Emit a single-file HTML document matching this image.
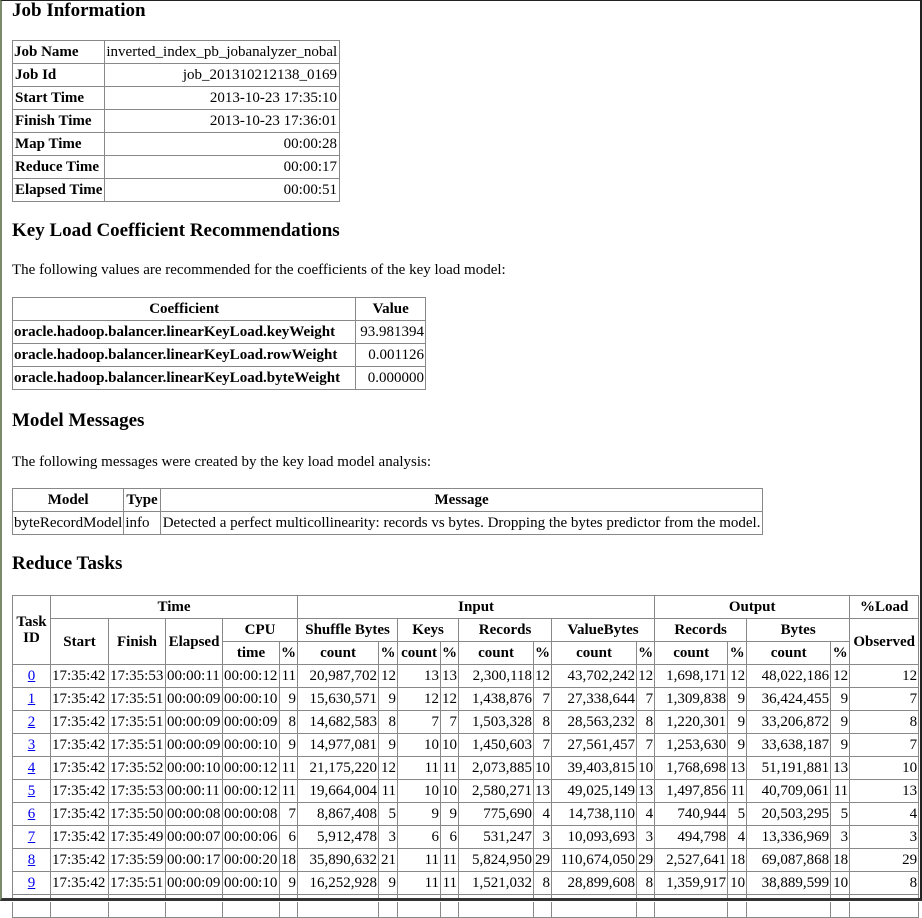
<!DOCTYPE html>
<html><head><meta charset="utf-8"><style>
html,body{margin:0;padding:0;background:#fff;}
body{width:922px;height:902px;overflow:hidden;position:relative;font-family:"Liberation Serif",serif;font-size:15px;color:#000;}
.frame{position:absolute;left:0;top:0;width:918px;height:897px;border-left:2px solid #7a8a6a;border-right:2px solid #222;border-bottom:3px solid #333;border-top:1px solid #222;z-index:10;pointer-events:none;}
.mask{position:absolute;left:0;top:898px;width:922px;height:4px;background:#fff;z-index:9;}
h3{margin:0;font-size:19px;font-weight:bold;position:absolute;left:12px;}
p{margin:0;position:absolute;left:12px;}
table{border-collapse:collapse;position:absolute;left:12px;}
td,th{border:1px solid #888;padding:0 2px;height:22px;line-height:16px;white-space:nowrap;}
th{font-weight:bold;}
.r{text-align:right;}
.b{font-weight:bold;text-align:left;}
a{color:#00e;}
#big td,#big th{padding:0 1px;}
#big{table-layout:fixed;}
</style></head><body>
<div class="frame"></div>
<h3 style="top:0px">Job Information</h3>
<table style="top:40px;width:328px">
<tr><td class="b" style="width:89px;padding:0 1px">Job Name</td><td style="padding:0 1px">inverted_index_pb_jobanalyzer_nobal</td></tr>
<tr><td class="b">Job Id</td><td class="r">job_201310212138_0169</td></tr>
<tr><td class="b">Start Time</td><td class="r">2013-10-23 17:35:10</td></tr>
<tr><td class="b">Finish Time</td><td class="r">2013-10-23 17:36:01</td></tr>
<tr><td class="b">Map Time</td><td class="r">00:00:28</td></tr>
<tr><td class="b">Reduce Time</td><td class="r">00:00:17</td></tr>
<tr><td class="b">Elapsed Time</td><td class="r">00:00:51</td></tr>
</table>
<h3 style="top:220px">Key Load Coefficient Recommendations</h3>
<p style="top:262px">The following values are recommended for the coefficients of the key load model:</p>
<table style="top:297px;width:414px">
<tr><th>Coefficient</th><th>Value</th></tr>
<tr><td class="b" style="padding:0 1px">oracle.hadoop.balancer.linearKeyLoad.keyWeight</td><td class="r" style="padding:0 1px">93.981394</td></tr>
<tr><td class="b" style="padding:0 1px">oracle.hadoop.balancer.linearKeyLoad.rowWeight</td><td class="r" style="padding:0 1px">0.001126</td></tr>
<tr><td class="b" style="padding:0 1px">oracle.hadoop.balancer.linearKeyLoad.byteWeight</td><td class="r" style="padding:0 1px">0.000000</td></tr>
</table>
<h3 style="top:410px">Model Messages</h3>
<p style="top:454px">The following messages were created by the key load model analysis:</p>
<table style="top:488px;width:750px">
<tr><th style="width:110px">Model</th><th style="width:30px">Type</th><th>Message</th></tr>
<tr><td style="padding:0 1px">byteRecordModel</td><td style="padding:0 1px">info</td><td>Detected a perfect multicollinearity: records vs bytes. Dropping the bytes predictor from the model.</td></tr>
</table>
<h3 style="top:553px">Reduce Tasks</h3>
<table id="big" style="top:595px;width:907px">
<colgroup><col style="width:38px"><col style="width:58px"><col style="width:57px"><col style="width:57px"><col style="width:57px"><col style="width:18px"><col style="width:81px"><col style="width:19px"><col style="width:43px"><col style="width:18px"><col style="width:75px"><col style="width:18px"><col style="width:85px"><col style="width:18px"><col style="width:73px"><col style="width:19px"><col style="width:84px"><col style="width:19px"><col style="width:69px"></colgroup>
<tr><th rowspan="3">Task<br>ID</th><th colspan="5">Time</th><th colspan="8">Input</th><th colspan="4">Output</th><th>%Load</th></tr>
<tr><th rowspan="2">Start</th><th rowspan="2">Finish</th><th rowspan="2">Elapsed</th><th colspan="2">CPU</th><th colspan="2">Shuffle Bytes</th><th colspan="2">Keys</th><th colspan="2">Records</th><th colspan="2">ValueBytes</th><th colspan="2">Records</th><th colspan="2">Bytes</th><th rowspan="2">Observed</th></tr>
<tr><th>time</th><th>%</th><th>count</th><th>%</th><th>count</th><th>%</th><th>count</th><th>%</th><th>count</th><th>%</th><th>count</th><th>%</th><th>count</th><th>%</th></tr>
<tr><td style="text-align:center"><a href="#">0</a></td><td>17:35:42</td><td>17:35:53</td><td>00:00:11</td><td>00:00:12</td><td class="r">11</td><td class="r">20,987,702</td><td class="r">12</td><td class="r">13</td><td class="r">13</td><td class="r">2,300,118</td><td class="r">12</td><td class="r">43,702,242</td><td class="r">12</td><td class="r">1,698,171</td><td class="r">12</td><td class="r">48,022,186</td><td class="r">12</td><td class="r">12</td></tr>
<tr><td style="text-align:center"><a href="#">1</a></td><td>17:35:42</td><td>17:35:51</td><td>00:00:09</td><td>00:00:10</td><td class="r">9</td><td class="r">15,630,571</td><td class="r">9</td><td class="r">12</td><td class="r">12</td><td class="r">1,438,876</td><td class="r">7</td><td class="r">27,338,644</td><td class="r">7</td><td class="r">1,309,838</td><td class="r">9</td><td class="r">36,424,455</td><td class="r">9</td><td class="r">7</td></tr>
<tr><td style="text-align:center"><a href="#">2</a></td><td>17:35:42</td><td>17:35:51</td><td>00:00:09</td><td>00:00:09</td><td class="r">8</td><td class="r">14,682,583</td><td class="r">8</td><td class="r">7</td><td class="r">7</td><td class="r">1,503,328</td><td class="r">8</td><td class="r">28,563,232</td><td class="r">8</td><td class="r">1,220,301</td><td class="r">9</td><td class="r">33,206,872</td><td class="r">9</td><td class="r">8</td></tr>
<tr><td style="text-align:center"><a href="#">3</a></td><td>17:35:42</td><td>17:35:51</td><td>00:00:09</td><td>00:00:10</td><td class="r">9</td><td class="r">14,977,081</td><td class="r">9</td><td class="r">10</td><td class="r">10</td><td class="r">1,450,603</td><td class="r">7</td><td class="r">27,561,457</td><td class="r">7</td><td class="r">1,253,630</td><td class="r">9</td><td class="r">33,638,187</td><td class="r">9</td><td class="r">7</td></tr>
<tr><td style="text-align:center"><a href="#">4</a></td><td>17:35:42</td><td>17:35:52</td><td>00:00:10</td><td>00:00:12</td><td class="r">11</td><td class="r">21,175,220</td><td class="r">12</td><td class="r">11</td><td class="r">11</td><td class="r">2,073,885</td><td class="r">10</td><td class="r">39,403,815</td><td class="r">10</td><td class="r">1,768,698</td><td class="r">13</td><td class="r">51,191,881</td><td class="r">13</td><td class="r">10</td></tr>
<tr><td style="text-align:center"><a href="#">5</a></td><td>17:35:42</td><td>17:35:53</td><td>00:00:11</td><td>00:00:12</td><td class="r">11</td><td class="r">19,664,004</td><td class="r">11</td><td class="r">10</td><td class="r">10</td><td class="r">2,580,271</td><td class="r">13</td><td class="r">49,025,149</td><td class="r">13</td><td class="r">1,497,856</td><td class="r">11</td><td class="r">40,709,061</td><td class="r">11</td><td class="r">13</td></tr>
<tr><td style="text-align:center"><a href="#">6</a></td><td>17:35:42</td><td>17:35:50</td><td>00:00:08</td><td>00:00:08</td><td class="r">7</td><td class="r">8,867,408</td><td class="r">5</td><td class="r">9</td><td class="r">9</td><td class="r">775,690</td><td class="r">4</td><td class="r">14,738,110</td><td class="r">4</td><td class="r">740,944</td><td class="r">5</td><td class="r">20,503,295</td><td class="r">5</td><td class="r">4</td></tr>
<tr><td style="text-align:center"><a href="#">7</a></td><td>17:35:42</td><td>17:35:49</td><td>00:00:07</td><td>00:00:06</td><td class="r">6</td><td class="r">5,912,478</td><td class="r">3</td><td class="r">6</td><td class="r">6</td><td class="r">531,247</td><td class="r">3</td><td class="r">10,093,693</td><td class="r">3</td><td class="r">494,798</td><td class="r">4</td><td class="r">13,336,969</td><td class="r">3</td><td class="r">3</td></tr>
<tr><td style="text-align:center"><a href="#">8</a></td><td>17:35:42</td><td>17:35:59</td><td>00:00:17</td><td>00:00:20</td><td class="r">18</td><td class="r">35,890,632</td><td class="r">21</td><td class="r">11</td><td class="r">11</td><td class="r">5,824,950</td><td class="r">29</td><td class="r">110,674,050</td><td class="r">29</td><td class="r">2,527,641</td><td class="r">18</td><td class="r">69,087,868</td><td class="r">18</td><td class="r">29</td></tr>
<tr><td style="text-align:center"><a href="#">9</a></td><td>17:35:42</td><td>17:35:51</td><td>00:00:09</td><td>00:00:10</td><td class="r">9</td><td class="r">16,252,928</td><td class="r">9</td><td class="r">11</td><td class="r">11</td><td class="r">1,521,032</td><td class="r">8</td><td class="r">28,899,608</td><td class="r">8</td><td class="r">1,359,917</td><td class="r">10</td><td class="r">38,889,599</td><td class="r">10</td><td class="r">8</td></tr>
<tr><td>&nbsp;</td><td></td><td></td><td></td><td></td><td></td><td></td><td></td><td></td><td></td><td></td><td></td><td></td><td></td><td></td><td></td><td></td><td></td><td></td></tr>
</table>
<div class="mask"></div>
</body></html>
